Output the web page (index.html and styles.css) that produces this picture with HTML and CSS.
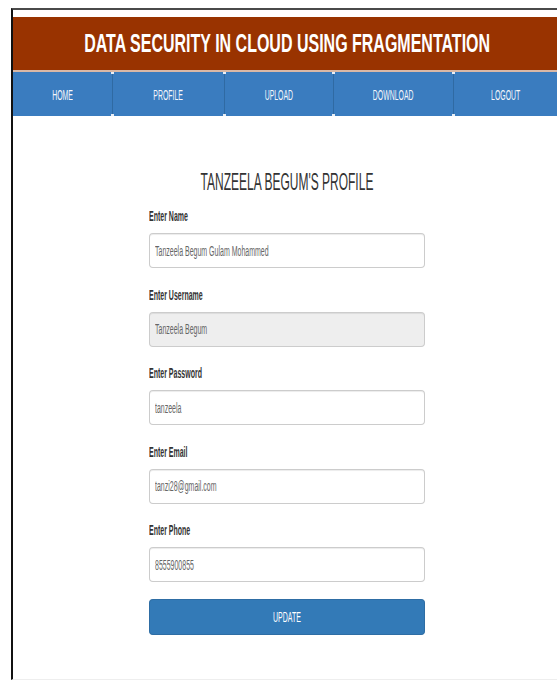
FILE: index.html
```html
<!DOCTYPE html>
<html lang="en">
<head>
<meta charset="utf-8">
<title>Profile - Data Security in Cloud Using Fragmentation</title>
<link rel="stylesheet" href="styles.css">
</head>
<body>
<div class="frame">
  <header class="banner">
    <h1 class="banner-title">DATA SECURITY IN CLOUD USING FRAGMENTATION</h1>
  </header>
  <nav class="menu">
    <a class="menu-item" href="#"><span class="menu-label">HOME</span></a>
    <a class="menu-item" href="#"><span class="menu-label">PROFILE</span></a>
    <a class="menu-item" href="#"><span class="menu-label">UPLOAD</span></a>
    <a class="menu-item" href="#"><span class="menu-label">DOWNLOAD</span></a>
    <a class="menu-item" href="#"><span class="menu-label">LOGOUT</span></a>
  </nav>
  <main class="content">
    <div class="profile">
      <form class="profile-form">
        <h2 class="profile-title">TANZEELA BEGUM'S PROFILE</h2>
        <div class="field">
          <label class="field-label" for="name">Enter Name</label>
          <input class="field-input" id="name" type="text" value="Tanzeela Begum Gulam Mohammed">
        </div>
        <div class="field">
          <label class="field-label" for="username">Enter Username</label>
          <input class="field-input field-input--readonly" id="username" type="text" value="Tanzeela Begum" readonly>
        </div>
        <div class="field">
          <label class="field-label" for="password">Enter Password</label>
          <input class="field-input" id="password" type="text" value="tanzeela">
        </div>
        <div class="field">
          <label class="field-label" for="email">Enter Email</label>
          <input class="field-input" id="email" type="text" value="tanzi28@gmail.com">
        </div>
        <div class="field">
          <label class="field-label" for="phone">Enter Phone</label>
          <input class="field-input" id="phone" type="text" value="8555900855">
        </div>
        <button class="update-btn" type="button">UPDATE</button>
      </form>
    </div>
  </main>
</div>
</body>
</html>
```

FILE: styles.css
```css
html, body {
  margin: 0;
  padding: 0;
  background: #ffffff;
  overflow: hidden;
}

body {
  font-family: "Liberation Sans", Arial, sans-serif;
}

/* outer window frame */
.frame {
  box-sizing: border-box;
  margin: 8px 0 0 11px;
  height: 672px;
  padding-top: 7px;
  border-top: 2px solid #4a4a4a;
  border-left: 2px solid #111111;
  border-bottom: 1px solid #eeeeee;
  overflow: hidden;
}

/* brown title banner */
.banner {
  display: flex;
  justify-content: center;
  align-items: center;
  height: 53px;
  padding-left: 4px;
  background: #993300;
  border-bottom: 2px solid #d9b8a6;
  overflow: hidden;
}

.banner-title {
  margin: 0;
  flex: none;
  white-space: nowrap;
  font-size: 25px;
  font-weight: bold;
  color: #ffffff;
  transform: scaleX(0.64);
}

/* blue navigation bar */
.menu {
  display: grid;
  grid-template-columns: 99px 112px 109px 120px 1fr;
  height: 44px;
  background: #3a7cbf;
}

.menu-item {
  position: relative;
  display: flex;
  justify-content: center;
  align-items: center;
  text-decoration: none;
  color: #f4f7fb;
  font-size: 15px;
}

.menu-item + .menu-item {
  border-left: 1px solid #2f6aa3;
}

/* small light dots where the separators meet the bar edges */
.menu-item + .menu-item::before,
.menu-item + .menu-item::after {
  content: "";
  position: absolute;
  left: -2px;
  width: 3px;
  height: 2px;
  background: #e9eef5;
}

.menu-item + .menu-item::before { top: 0; }
.menu-item + .menu-item::after { bottom: 0; }

.menu-label {
  display: inline-block;
  white-space: nowrap;
  transform: scaleX(0.46);
}

/* profile form */
.content {
  padding-top: 53px;
}

.profile {
  width: 276px;
  margin-left: 136px;
}

.profile-form {
  width: 552px;
  transform: scaleX(0.5);
  transform-origin: 0 0;
}

.profile-title {
  margin: 0 0 11px;
  font-size: 24px;
  line-height: 26px;
  font-weight: normal;
  text-align: center;
  color: #333333;
}

.field {
  margin-bottom: 16.5px;
}

.field-label {
  display: block;
  margin-bottom: 7px;
  font-size: 14px;
  line-height: 20px;
  font-weight: bold;
  color: #333333;
}

.field-input {
  display: block;
  box-sizing: border-box;
  width: 100%;
  height: 35px;
  margin: 0;
  padding: 0 10px;
  border: 1px solid #cccccc;
  border-left-width: 2px;
  border-right-width: 2px;
  border-radius: 8px / 4px;
  background: #ffffff;
  box-shadow: inset 0 1px 1px rgba(0, 0, 0, 0.08);
  font-family: "Liberation Sans", Arial, sans-serif;
  font-size: 14px;
  color: #666666;
}

.field-input--readonly {
  background: #eeeeee;
}

.update-btn {
  display: block;
  box-sizing: border-box;
  width: 100%;
  height: 36px;
  margin: 0;
  padding: 0;
  border: 1px solid #2e6da4;
  border-left-width: 2px;
  border-right-width: 2px;
  border-radius: 8px / 4px;
  background: #337ab7;
  font-family: "Liberation Sans", Arial, sans-serif;
  font-size: 14px;
  color: #ffffff;
}
```
